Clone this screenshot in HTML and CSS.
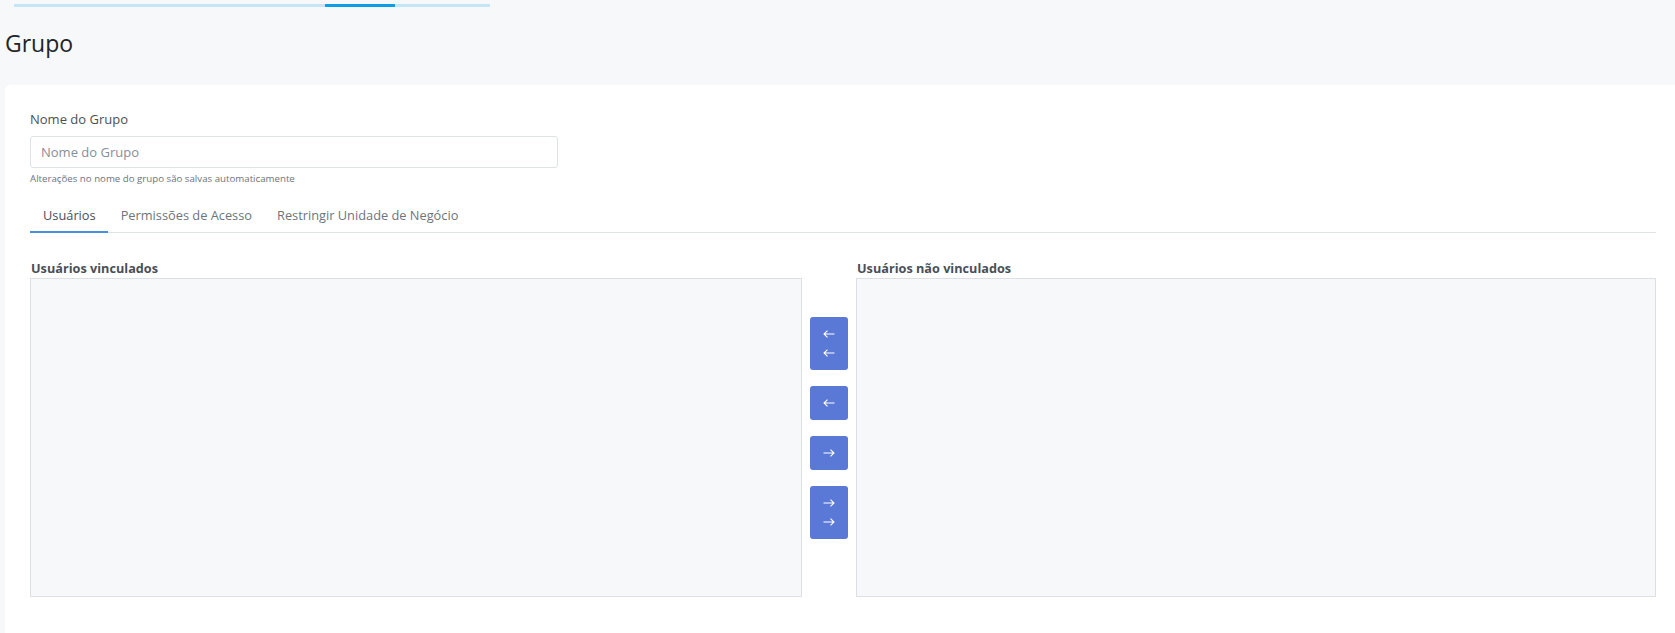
FILE: index.html
```html
<!DOCTYPE html>
<html lang="pt-BR">
<head>
  <meta charset="UTF-8" />
  <meta name="viewport" content="width=device-width, initial-scale=1.0" />
  <title>Grupo</title>
  <link rel="stylesheet" href="styles.css">
</head>
<body>
  <div class="progress">
    <span class="progress-part"></span>
    <span class="progress-part active"></span>
    <span class="progress-part rest"></span>
  </div>

  <h1 class="page-title">Grupo</h1>

  <div class="card">
    <label class="field-label" for="groupName">Nome do Grupo</label>
    <input type="text" id="groupName" class="field-input" placeholder="Nome do Grupo" />
    <div class="field-help">Alterações no nome do grupo são salvas automaticamente</div>

    <div class="tabs">
      <a class="tab active">Usuários</a>
      <a class="tab">Permissões de Acesso</a>
      <a class="tab">Restringir Unidade de Negócio</a>
    </div>

    <div class="transfer">
      <div class="list-col">
        <div class="list-title">Usuários vinculados</div>
        <div class="list-box"></div>
      </div>

      <div class="actions">
        <button class="move-btn" title="Vincular todos">
          <svg class="arrow" viewBox="0 0 12 8"><path d="M11.5 4H1M4.5 0.6L1 4l3.5 3.4"/></svg>
          <svg class="arrow" viewBox="0 0 12 8"><path d="M11.5 4H1M4.5 0.6L1 4l3.5 3.4"/></svg>
        </button>
        <button class="move-btn" title="Vincular">
          <svg class="arrow" viewBox="0 0 12 8"><path d="M11.5 4H1M4.5 0.6L1 4l3.5 3.4"/></svg>
        </button>
        <button class="move-btn" title="Desvincular">
          <svg class="arrow" viewBox="0 0 12 8"><path d="M0.5 4H11M7.5 0.6L11 4l-3.5 3.4"/></svg>
        </button>
        <button class="move-btn" title="Desvincular todos">
          <svg class="arrow" viewBox="0 0 12 8"><path d="M0.5 4H11M7.5 0.6L11 4l-3.5 3.4"/></svg>
          <svg class="arrow" viewBox="0 0 12 8"><path d="M0.5 4H11M7.5 0.6L11 4l-3.5 3.4"/></svg>
        </button>
      </div>

      <div class="list-col">
        <div class="list-title">Usuários não vinculados</div>
        <div class="list-box"></div>
      </div>
    </div>
  </div>
</body>
</html>
```

FILE: styles.css
```css
html, body {
  margin: 0;
  height: 100%;
  background: #f7f8fa;
  font-family: "Open Sans", "Noto Sans", sans-serif;
  overflow: hidden;
}

.progress {
  display: flex;
  margin: 4px 0 0 14px;
  width: 476px;
  height: 3px;
}
.progress-part {
  width: 311px;
  background: #c6e6f7;
}
.progress-part.active {
  width: 70px;
  background: #0d9ee6;
}
.progress-part.rest { width: 95px; }

.page-title {
  margin: 23px 0 0 5px;
  font-size: 23px;
  font-weight: normal;
  line-height: 26px;
  color: #212529;
}

.card {
  margin: 29px 0 0 5px;
  padding: 25px 19px 40px 25px;
  background: #fff;
  border-radius: 6px 0 0 0;
}

.field-label {
  display: block;
  font-size: 13px;
  line-height: 19px;
  color: #495057;
}
.field-input {
  display: block;
  box-sizing: border-box;
  width: 528px;
  height: 32px;
  margin-top: 7px;
  padding: 0 10px;
  border: 1px solid #dee2e6;
  border-radius: 3px;
  font-family: inherit;
  font-size: 13px;
  color: #495057;
}
.field-input::placeholder { color: #868e96; }
.field-help {
  margin-top: 3px;
  font-size: 9.7px;
  line-height: 15px;
  color: #6c757d;
}

.tabs {
  display: flex;
  margin-top: 12px;
  border-bottom: 1px solid #dee2e6;
}
.tab {
  padding: 8px 12px 6px 13px;
  font-size: 12.8px;
  line-height: 19px;
  color: #6c757d;
  border-bottom: 2px solid transparent;
  margin-bottom: -1px;
  cursor: pointer;
}
.tab.active {
  color: #495057;
  border-bottom-color: #4a90d9;
}

.transfer {
  display: grid;
  grid-template-columns: 772px 54px 1fr;
  margin-top: 25px;
}
.list-title {
  font-size: 12.7px;
  font-weight: bold;
  line-height: 20px;
  color: #495057;
  padding-left: 1px;
}
.list-box {
  box-sizing: border-box;
  height: 319px;
  background: #f7f8fa;
  border: 1px solid #dcdfe3;
}

.actions {
  display: flex;
  flex-direction: column;
  align-items: center;
  gap: 16px;
  padding-top: 59px;
}
.move-btn {
  display: flex;
  flex-direction: column;
  align-items: center;
  justify-content: center;
  gap: 11px;
  width: 38px;
  min-height: 34px;
  padding: 13px 0;
  border: none;
  border-radius: 3px;
  background: #5a78d5;
  cursor: pointer;
}
.arrow {
  width: 12px;
  height: 8px;
  fill: none;
  stroke: #fff;
  stroke-width: 1.1;
}
```
